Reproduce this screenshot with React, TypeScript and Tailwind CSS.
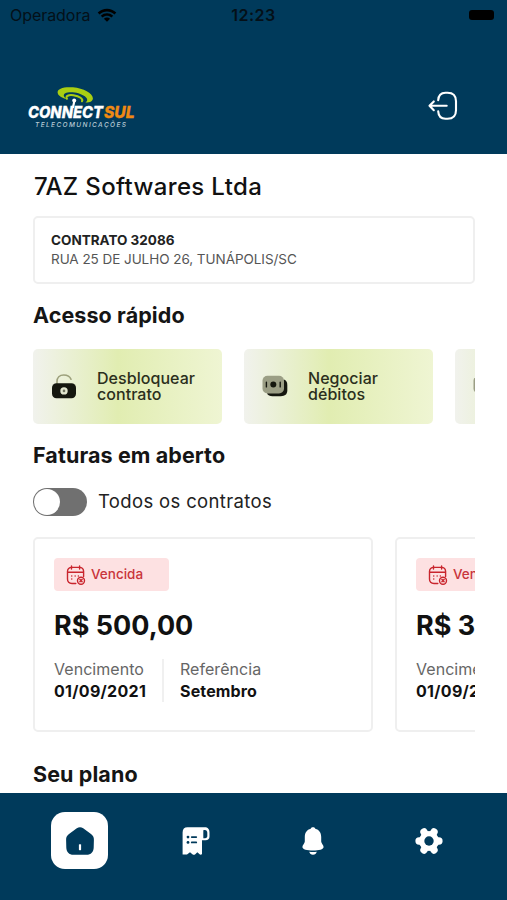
import { Fragment } from "react";
import type { ReactNode } from "react";

const quickActions = [
  { label: ["Desbloquear", "contrato"], icon: <UnlockIcon /> },
  { label: ["Negociar", "débitos"], icon: <MoneyIcon /> },
  { label: [], icon: <MoneyIcon /> },
];

const invoices = [
  { status: "Vencida", value: "R$ 500,00", dueDate: "01/09/2021", reference: "Setembro" },
  { status: "Vencida", value: "R$ 300,00", dueDate: "01/09/2021", reference: "Setembro" },
];

function WifiIcon() {
  return (
    <svg width="20" height="14" viewBox="0 0 20 14">
      <path d="M.7 4.6C5.9-.5 14.1-.5 19.3 4.6L17.5 6.4C13.300 2.4 6.700 2.400 2.500 6.400Z" />
      <path d="M3.800 7.700C7.300 4.400 12.700 4.400 16.200 7.700L14.400 9.500C11.900 7.200 8.100 7.200 5.600 9.500Z" />
      <path d="M6.900 10.700C8.700 9.200 11.300 9.200 13.100 10.700L10 13.700Z" />
    </svg>
  );
}

function Logo() {
  return (
    <svg width="112" height="46" viewBox="26 84 112 46" className="font-[Inter,sans-serif]">
      <path
        fillRule="evenodd"
        fill="#a9ce12"
        d="M57.600 92.500C57.300 88.500 64 86.500 73 87.300C83.500 88.300 92.600 93.400 92.900 98.200C92.900 101 90.500 102.500 85.500 102.500C88 101 87.800 98.700 84.800 96.300C80 92.400 69.500 91 65.300 93.200C62.700 94.600 63.600 97 67 99.200C61.500 98 57.800 95.500 57.600 92.500Z"
      />
      <path
        fill="none"
        stroke="#a9ce12"
        strokeWidth="2"
        strokeLinecap="round"
        d="M67 98.800C65 96 68.700 94.600 73.500 95.300C79.500 96.200 83.500 99 82 101.300"
      />
      <path d="M73.200 101H75.400L74 108H71.800Z" fill="#fff" />
      <circle cx="74.200" cy="100.500" r="2" fill="#fff" />
      <g fontSize="16" fontWeight="800" fontStyle="italic" strokeWidth=".3">
        <text x="28" y="118" fill="#fff" stroke="#fff" textLength="75" lengthAdjust="spacingAndGlyphs">
          CONNECT
        </text>
        <text x="104" y="118" fill="#f08a13" stroke="#f08a13" textLength="30.500" lengthAdjust="spacingAndGlyphs">
          SUL
        </text>
      </g>
      <text x="35" y="127" fontSize="6.500" fontWeight="500" fontStyle="italic" fill="#b9cbd6" textLength="91">
        TELECOMUNICAÇÕES
      </text>
    </svg>
  );
}

function LogoutIcon() {
  return (
    <svg width="30" height="30" viewBox="0 0 30 30" fill="none" stroke="#fff" strokeWidth="2.100" strokeLinecap="round" strokeLinejoin="round">
      <path d="M10.200 9.300C10.400 4.200 12.600 1.700 17.500 1.700H19.500C25.300 1.700 28 4.400 28 10.200V19.200C28 25 25.300 27.700 19.500 27.700H17.500C12.600 27.700 10.500 25.200 10.200 20.400" />
      <path d="M18.700 14.800H2M5.800 10.400L1.500 14.800L5.800 19.200" />
    </svg>
  );
}

function UnlockIcon() {
  return (
    <svg width="26" height="26" viewBox="0 0 26 26">
      <path d="M6 11V8.500C6 4.500 8.500 2 12.800 2C16.800 2 19 3.700 20 6.200" fill="none" stroke="#9da17c" strokeWidth="1.600" strokeLinecap="round" />
      <rect x="1" y="10.200" width="24" height="15" rx="4.500" fill="#15170f" />
      <circle cx="13" cy="17.900" r="3.700" fill="#e2e6cf" />
      <circle cx="13" cy="17.900" r="1.300" fill="#6f7360" />
    </svg>
  );
}

function MoneyIcon() {
  return (
    <svg width="26" height="22" viewBox="0 0 26 22">
      <path d="M5 18.500C6 20.400 7.800 21.200 10.400 21.200H18.800C23 21.200 25.300 19.300 25.300 15.300V9.700C25.300 7 24.200 5.300 22 4.500Z" fill="#15170f" />
      <rect x=".5" y=".8" width="21.500" height="17.600" rx="5" fill="#9b9e85" />
      <circle cx="11.300" cy="9.600" r="3" fill="#15170f" />
      <path d="M4.400 7.300V11.900M18.200 7.300V11.900" stroke="#15170f" strokeWidth="1.400" strokeLinecap="round" />
    </svg>
  );
}

function CalendarIcon() {
  return (
    <svg width="20" height="20" viewBox="0 0 20 20" fill="none" stroke="#c9252d" strokeWidth="1.400" strokeLinecap="round" strokeLinejoin="round">
      <path d="M5.500 1V4M13.600 1V4M1.800 7.200H17.300" />
      <path d="M9.800 18.500H6C3 18.500 1.500 17 1.500 14V6.500C1.500 3.800 3 2.400 6 2.400H13.200C16.200 2.400 17.600 3.800 17.600 6.500V11.500" />
      <path d="M5.700 11H5.800M9.100 11H9.200M5.700 14H5.800M12.300 11H12.400" />
      <circle cx="15" cy="15.700" r="3.500" />
      <path d="M13.900 14.600L16.100 16.800M16.100 14.600L13.900 16.800" />
    </svg>
  );
}

function HomeIcon() {
  return (
    <svg width="28" height="28" viewBox="0 0 28 28">
      <path d="M10.800 1.300C12.800 0 15.200 0 17.200 1.300L25 7C27 8.500 28 10.300 27.900 12.700L27.700 20.500C27.600 25 25 27.800 20.500 27.800H7.500C3 27.800.4 25 .3 20.500L.1 12.700C0 10.300 1 8.500 3 7Z" fill="#003a5b" />
      <rect x="12.900" y="17.200" width="2.200" height="6" rx=".6" fill="#fff" />
    </svg>
  );
}

function ReceiptIcon() {
  return (
    <svg width="28" height="28" viewBox="0 0 28 28">
      <path d="M5.500.3H22.500C26 .3 27.500 2.300 27.500 5.500V9.500C27.500 12 26 13.200 23.500 13.200H20V27.200L18.200 27.700L15.300 25.300L13.300 27.200C12.300 28 11.400 28 10.400 27.200L8 25.300L5 27.600H.6V5.500C.6 2.200 2.300.3 5.500.3Z" fill="#fff" />
      <path d="M21.300 3.300C23.900 2.500 25.300 3.700 25.300 6V9C25.300 10.600 24.500 11.300 21.300 11.300Z" fill="#003a5b" />
      <path d="M9.800 10.100H14.200M9.800 15.400H14.200" stroke="#003a5b" strokeWidth="1.900" strokeLinecap="round" />
      <circle cx="6" cy="10.100" r="1.400" fill="#003a5b" />
      <circle cx="6" cy="15.400" r="1.400" fill="#003a5b" />
    </svg>
  );
}

function BellIcon() {
  return (
    <svg width="22" height="28" viewBox="0 0 22 28" fill="#fff">
      <path d="M8.700 1.700C9.500-.1 12.500-.1 13.300 1.700C17.200 2.700 19.200 5.800 19.200 9.800V14.400C19.200 16 21.600 18 21.600 20C21.600 22.500 17 23.500 11 23.500S.4 22.500.4 20C.4 18 2.800 16 2.800 14.400V9.800C2.800 5.800 4.800 2.700 8.700 1.700Z" />
      <path d="M7.200 24.700C9.800 25 12.200 25 14.800 24.700C14.200 26.700 13 27.700 11 27.700S7.800 26.700 7.200 24.700Z" />
    </svg>
  );
}

function GearIcon() {
  return (
    <svg width="28" height="28" viewBox="0 0 28 28">
      <g stroke="#fff" strokeWidth="7.400" strokeLinecap="round">
        <path d="M4.100 14H23.900" />
        <path d="M9 5L19 23" />
        <path d="M19 5L9 23" />
      </g>
      <circle cx="14" cy="14" r="10" fill="#fff" />
      <circle cx="14" cy="14" r="4.700" fill="#003a5b" />
    </svg>
  );
}

function SectionTitle({ children }: { children: ReactNode }) {
  return (
    <h2 className="text-[21.5px] leading-[26px] font-bold tracking-[0.1px] whitespace-nowrap text-[#151515]">
      {children}
    </h2>
  );
}

const navItems = [
  { name: "Início", icon: <HomeIcon />, active: true },
  { name: "Faturas", icon: <ReceiptIcon /> },
  { name: "Notificações", icon: <BellIcon /> },
  { name: "Ajustes", icon: <GearIcon /> },
];

export default function App() {
  return (
    <div className="flex h-[900px] w-[507px] flex-col overflow-hidden bg-white font-[Inter,sans-serif] text-[#111]">
      <header className="h-[154px] shrink-0 bg-[#003a5b]">
        <div className="grid h-[30px] grid-cols-3 items-center px-[10px] text-[16px] text-[#041018]">
          <div className="flex items-center gap-[7px]">
            <span className="tracking-[-0.05px]">Operadora</span>
            <WifiIcon />
          </div>
          <span className="text-center font-semibold tracking-[0.5px]">12:23</span>
          <div className="mr-[3px] h-[10px] w-[25px] justify-self-end rounded-[3px] bg-black" />
        </div>
        <div className="mt-[54px] flex items-center justify-between pr-[49px] pl-[26px]">
          <Logo />
          <button className="mb-[2px]" aria-label="Sair">
            <LogoutIcon />
          </button>
        </div>
      </header>

      <main className="mr-[32px] ml-[33px] min-h-0 flex-1 overflow-hidden">
        <h1 className="mt-[18px] pl-px text-[24px] leading-[30px] font-medium tracking-[0.35px]">7AZ Softwares Ltda</h1>

        <div className="mt-[14px] h-[68px] rounded-[5px] border-2 border-[#efefef] px-4 pt-[13px]">
          <p className="text-[13.5px] leading-[18px] font-bold text-[#222]">CONTRATO 32086</p>
          <p className="mt-px text-[13.5px] leading-[18px] tracking-[-0.05px] text-[#555]">RUA 25 DE JULHO 26, TUNÁPOLIS/SC</p>
        </div>

        <div className="mt-[18px]">
          <SectionTitle>Acesso rápido</SectionTitle>
        </div>
        <div className="mt-[21px] flex gap-[22px]">
          {quickActions.map((action, index) => (
            <div
              key={index}
              className="flex h-[75px] w-[189px] shrink-0 items-center rounded-[5px] bg-linear-to-r from-[#f1f2ed] via-[#e1edb1] via-45% to-[#eff5d3] pb-[2px] pl-[18px]"
            >
              <div className="flex w-[46px]">{action.icon}</div>
              <p className="text-[16px] leading-[16px] font-medium tracking-[0.05px] text-[#2b2f1c]">
                {action.label.map((line) => (
                  <Fragment key={line}>
                    {line}
                    <br />
                  </Fragment>
                ))}
              </p>
            </div>
          ))}
        </div>

        <div className="mt-[18px]">
          <SectionTitle>Faturas em aberto</SectionTitle>
        </div>
        <div className="mt-[20px] flex items-center gap-[11px]">
          <div className="flex h-[28px] w-[54px] items-center rounded-full bg-[#707070] p-px">
            <span className="size-[26px] rounded-full bg-white" />
          </div>
          <span className="mb-[2px] text-[18.5px] leading-[24px] tracking-[0.35px] text-[#222]">Todos os contratos</span>
        </div>

        <div className="mt-[21px] flex gap-[22px]">
          {invoices.map((invoice) => (
            <div key={invoice.value} className="h-[195px] w-[340px] shrink-0 rounded-[5px] border-2 border-[#efefef] px-[19px] pt-[19px]">
              <div className="flex h-[33px] w-[115px] items-center gap-[5px] rounded-[4px] bg-[#fde1e2] pl-[12px]">
                <CalendarIcon />
                <span className="text-[13.5px] font-medium text-[#c9353b]">{invoice.status}</span>
              </div>
              <p className="mt-[18px] text-[27px] leading-[34px] font-bold whitespace-nowrap">{invoice.value}</p>
              <div className="mt-[16px] flex">
                <div className="w-[110px] border-r-2 border-[#f0f0f0]">
                  <p className="text-[16px] leading-[21px] tracking-[0.05px] text-[#666]">Vencimento</p>
                  <p className="text-[16px] leading-[22px] font-bold tracking-[0.3px]">{invoice.dueDate}</p>
                </div>
                <div className="pl-[16px]">
                  <p className="text-[16px] leading-[21px] tracking-[0.05px] text-[#666]">Referência</p>
                  <p className="text-[16px] leading-[22px] font-bold tracking-[0.15px]">{invoice.reference}</p>
                </div>
              </div>
            </div>
          ))}
        </div>

        <div className="mt-[29px]">
          <SectionTitle>Seu plano</SectionTitle>
        </div>
      </main>

      <nav className="flex h-[107px] shrink-0 justify-between bg-[#003a5b] pt-[19px] pr-[49px] pl-[51px]">
        {navItems.map((item) => (
          <button
            key={item.name}
            aria-label={item.name}
            className={
              item.active
                ? "flex size-[57px] items-center justify-center rounded-[14px] bg-white"
                : "flex size-[57px] items-center justify-center"
            }
          >
            {item.icon}
          </button>
        ))}
      </nav>
    </div>
  );
}
